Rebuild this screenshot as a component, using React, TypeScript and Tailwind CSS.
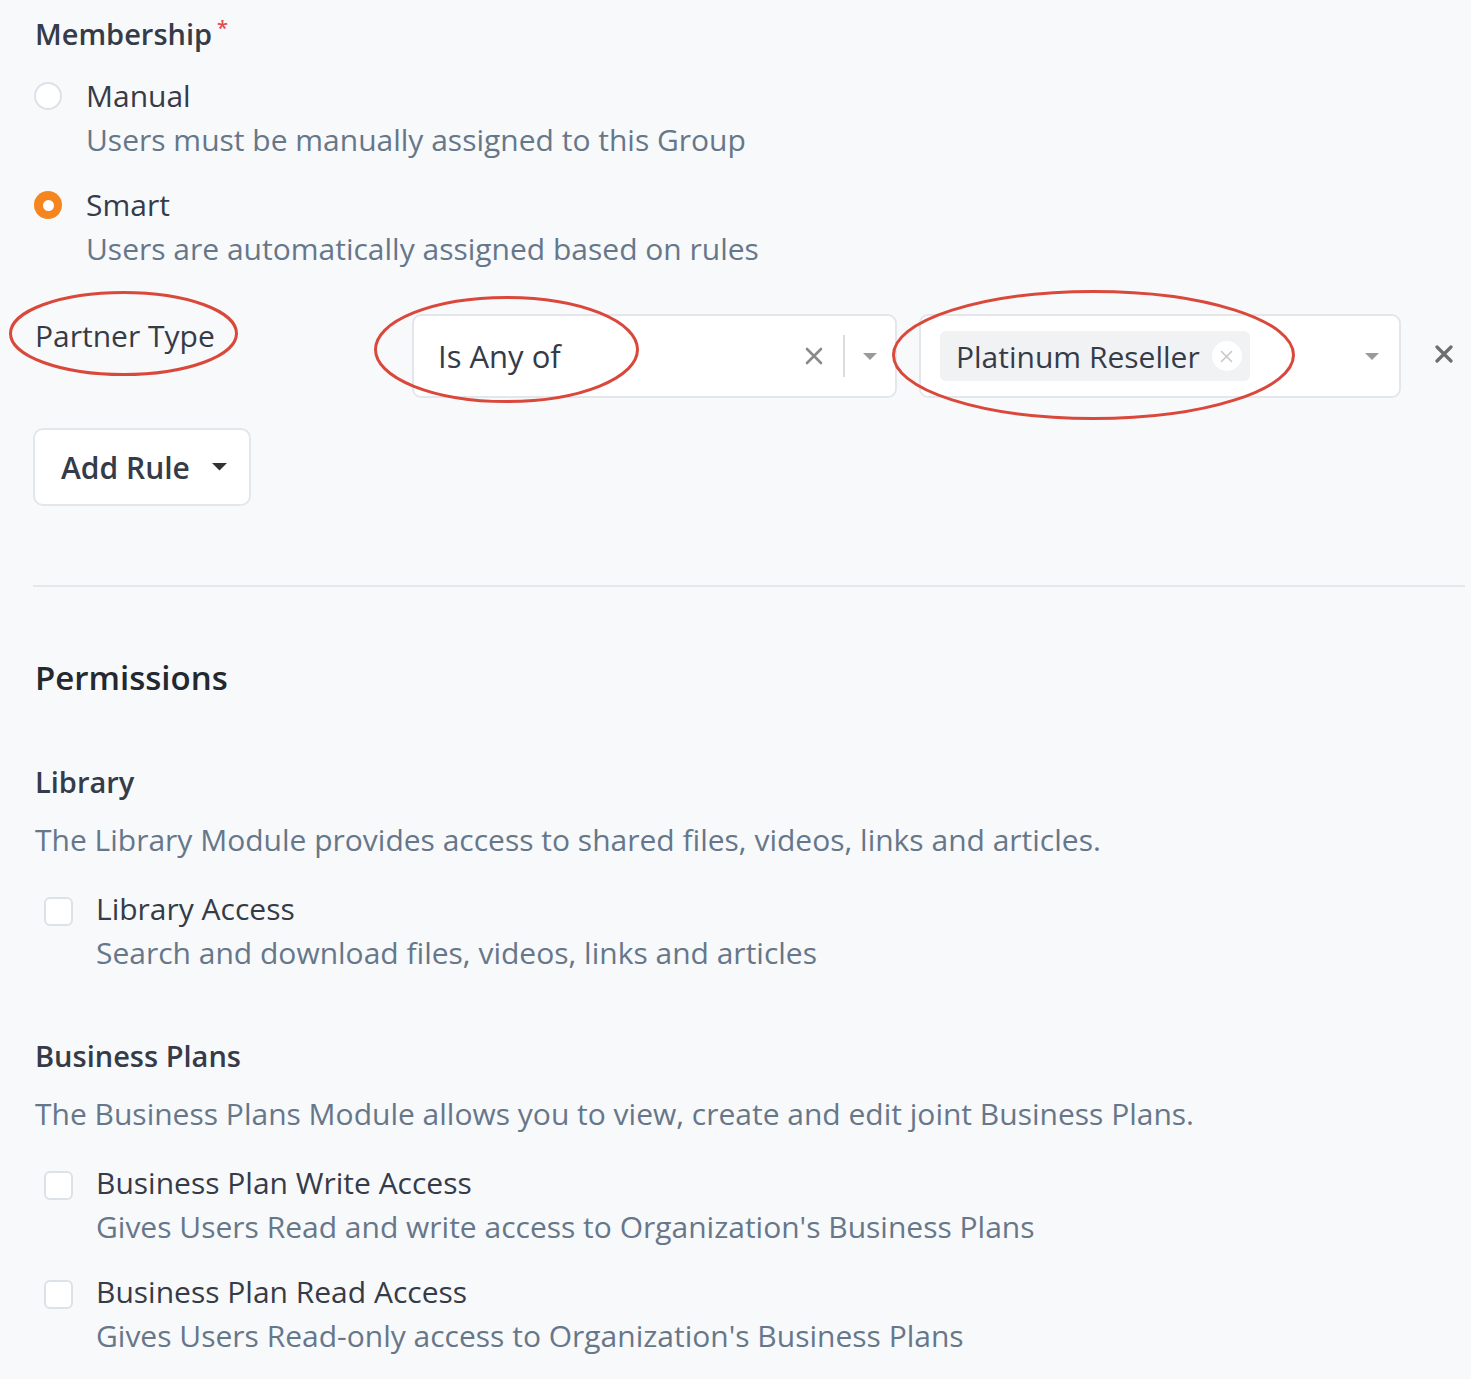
import React from "react"

const font = { fontFamily: "'Open Sans', Lato, sans-serif" }

function Radio({ checked }: { checked?: boolean }) {
  if (checked) {
    return (
      <span className="mt-[8px] flex h-[28px] w-[28px] shrink-0 items-center justify-center rounded-full bg-[#f5861f]">
        <span className="h-[11px] w-[11px] rounded-full bg-white" />
      </span>
    )
  }
  return <span className="mt-[8px] h-[28px] w-[28px] shrink-0 rounded-full border-2 border-[#dde2e8] bg-white" />
}

function Checkbox() {
  return <span className="ml-[10px] mt-[10px] h-[29px] w-[29px] shrink-0 rounded-[6px] border-2 border-[#dde2e8] bg-white" />
}

function XIcon({ size = 18, color = "#7a7a7a", stroke = 3 }: { size?: number; color?: string; stroke?: number }) {
  return (
    <svg width={size} height={size} viewBox="0 0 18 18" fill="none">
      <path d="M2 2L16 16M16 2L2 16" stroke={color} strokeWidth={stroke} strokeLinecap="round" />
    </svg>
  )
}

function Caret({ color = "#9a9a9a", w = 14 }: { color?: string; w?: number }) {
  return (
    <svg width={w} height={w / 2} viewBox="0 0 14 7">
      <path d="M0 0H14L7 7Z" fill={color} />
    </svg>
  )
}

function Option({ title, desc, checked }: { title: string; desc: string; checked?: boolean }) {
  return (
    <div className="flex gap-[24px] pl-[34px]">
      <Radio checked={checked} />
      <div>
        <div className="text-[30px] leading-[44px] font-medium text-[#353b48]">{title}</div>
        <div className="text-[30px] leading-[44px] text-[#66778a]">{desc}</div>
      </div>
    </div>
  )
}

function Perm({ title, desc, className = "" }: { title: string; desc: string; className?: string }) {
  return (
    <div className={`flex gap-[23px] pl-[34px] ${className}`}>
      <Checkbox />
      <div>
        <div className="text-[30px] leading-[44px] font-medium text-[#353b48]">{title}</div>
        <div className="text-[30px] leading-[44px] text-[#66778a]">{desc}</div>
      </div>
    </div>
  )
}

export default function App() {
  return (
    <div className="relative min-h-[1379px] w-[1471px] overflow-hidden bg-[#f8f9fb] pt-[12px]" style={font}>
      <div className="pl-[35px] text-[29px] leading-[44px] font-semibold text-[#353b48]">
        Membership<span className="relative -top-[10px] ml-[5px] text-[20px] text-[#e5484d]">*</span>
      </div>

      <div className="mt-[14px] flex flex-col gap-[21px]">
        <Option title="Manual" desc="Users must be manually assigned to this Group" />
        <Option title="Smart" desc="Users are automatically assigned based on rules" checked />
      </div>

      <div className="mt-[43px] flex items-start pl-[35px]">
        <div className="w-[377px] text-[30px] leading-[44px] font-medium text-[#353b48]">Partner Type</div>
        <div className="flex h-[84px] w-[485px] items-center rounded-[9px] border-2 border-[#e3e7ec] bg-white pl-[24px]">
          <span className="flex-1 text-[31px] font-medium text-[#353b48]">Is Any of</span>
          <XIcon size={18} color="#8a8a8a" stroke={2.6} />
          <span className="ml-[20px] h-[42px] w-[2px] bg-[#dcdcdc]" />
          <span className="ml-[18px] mr-[18px]">
            <Caret />
          </span>
        </div>
        <div className="ml-[22px] flex h-[84px] w-[482px] items-center rounded-[9px] border-2 border-[#e3e7ec] bg-white pl-[19px]">
          <div className="flex h-[50px] items-center rounded-[6px] bg-[#f1f2f4] pl-[16px] pr-[8px]">
            <span className="text-[30px] font-medium text-[#353b48]">Platinum Reseller</span>
            <span className="ml-[12px] flex h-[30px] w-[30px] items-center justify-center rounded-full bg-white">
              <XIcon size={13} color="#c4c4c4" stroke={2} />
            </span>
          </div>
          <span className="ml-auto mr-[20px]">
            <Caret />
          </span>
        </div>
        <button className="ml-[34px] mt-[31px]">
          <XIcon size={18} color="#6e6e6e" stroke={3.2} />
        </button>
      </div>

      <div className="mt-[30px] pl-[33px]">
        <button className="flex h-[78px] w-[218px] items-center rounded-[10px] border-2 border-[#e3e7ec] bg-white pl-[26px] text-[30px] font-semibold text-[#353b48]">
          Add Rule
          <span className="ml-[22px]">
            <Caret color="#333" w={15} />
          </span>
        </button>
      </div>

      <div className="mx-[6px] ml-[33px] mt-[79px] h-[2px] bg-[#e5e7ea]" />

      <h2 className="mt-[69px] pl-[35px] text-[33px] leading-[44px] font-semibold text-[#24282f]">Permissions</h2>

      <h3 className="mt-[60px] pl-[35px] text-[29px] leading-[44px] font-semibold text-[#353b48]">Library</h3>
      <p className="mt-[14px] pl-[35px] text-[30px] leading-[44px] text-[#66778a]">
        The Library Module provides access to shared files, videos, links and articles.
      </p>
      <Perm className="mt-[25px]" title="Library Access" desc="Search and download files, videos, links and articles" />

      <h3 className="mt-[59px] pl-[35px] text-[29px] leading-[44px] font-semibold text-[#353b48]">Business Plans</h3>
      <p className="mt-[14px] pl-[35px] text-[30px] leading-[44px] text-[#66778a]">
        The Business Plans Module allows you to view, create and edit joint Business Plans.
      </p>
      <Perm
        className="mt-[25px]"
        title="Business Plan Write Access"
        desc="Gives Users Read and write access to Organization's Business Plans"
      />
      <Perm
        className="mt-[21px]"
        title="Business Plan Read Access"
        desc="Gives Users Read-only access to Organization's Business Plans"
      />

      <svg className="pointer-events-none absolute left-0 top-0" width="1471" height="1379" fill="none">
        <ellipse cx="123.5" cy="333.5" rx="113" ry="41" stroke="#d9483b" strokeWidth="3" />
        <ellipse cx="506.5" cy="349.5" rx="131" ry="52" stroke="#d9483b" strokeWidth="3" />
        <ellipse cx="1093.5" cy="355" rx="200" ry="63.5" stroke="#d9483b" strokeWidth="3" />
      </svg>
    </div>
  )
}
